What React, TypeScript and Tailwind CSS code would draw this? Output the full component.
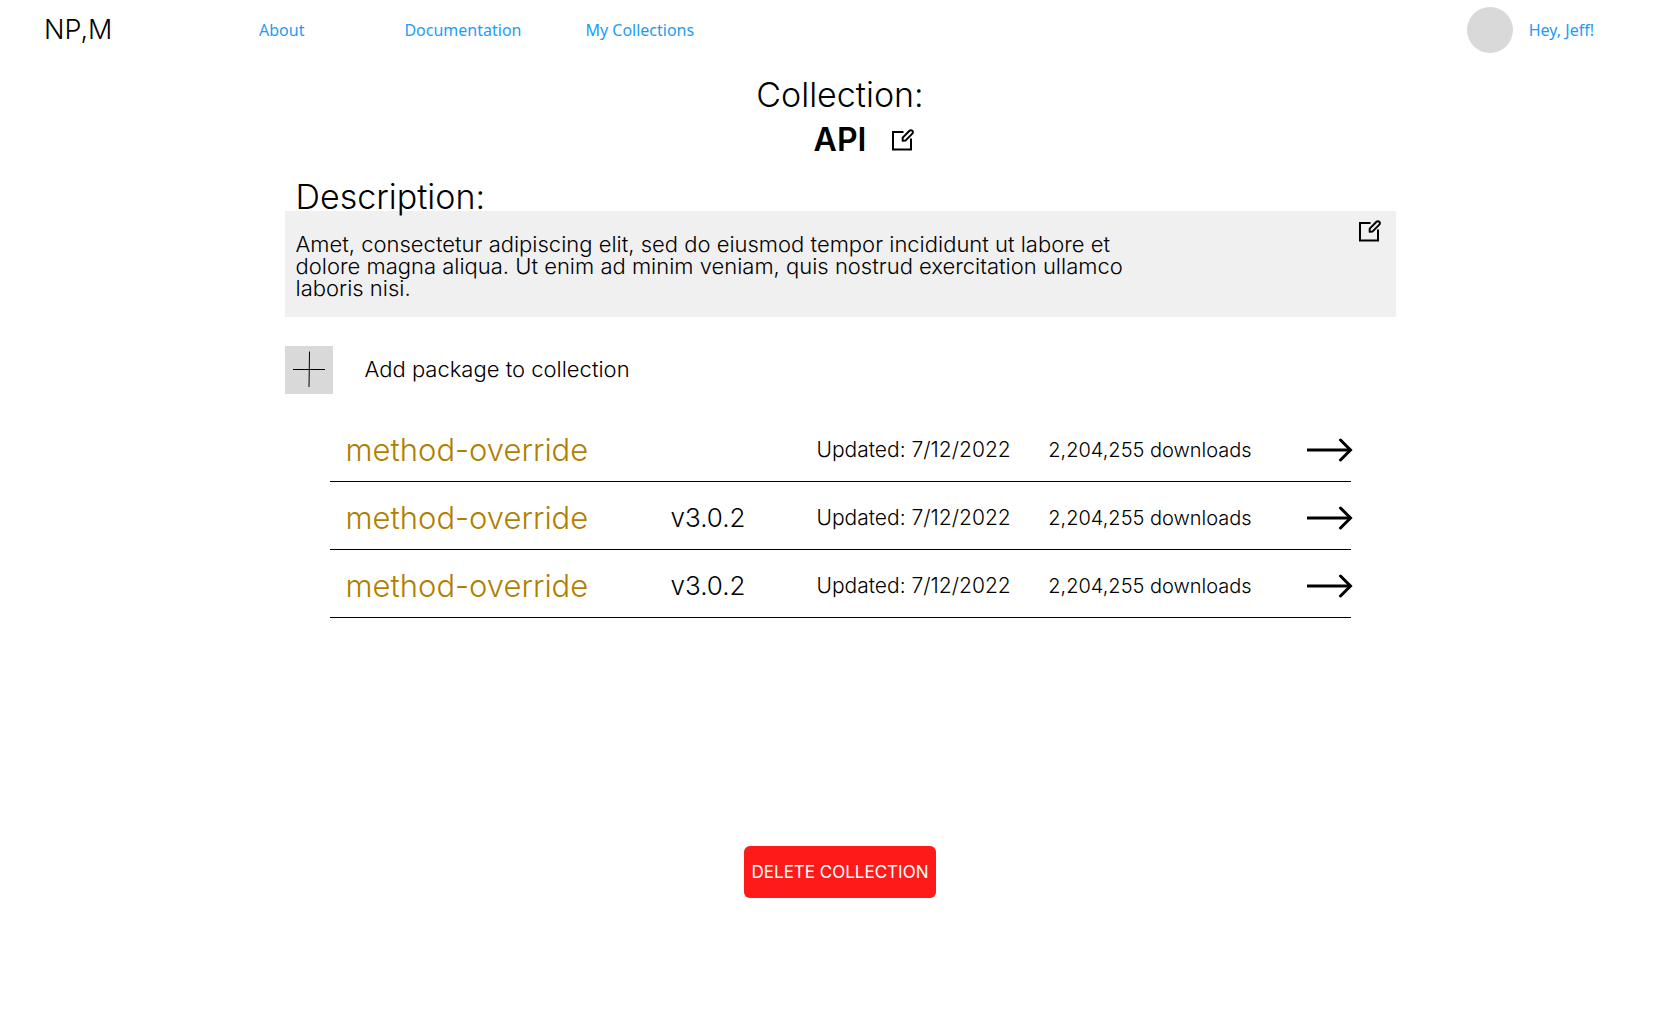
import type { ReactNode } from "react";

type Pkg = { id: number; name: string; version?: string; updated: string; downloads: string };

const packages: Pkg[] = [
  { id: 1, name: "method-override", updated: "7/12/2022", downloads: "2,204,255" },
  { id: 2, name: "method-override", version: "v3.0.2", updated: "7/12/2022", downloads: "2,204,255" },
  { id: 3, name: "method-override", version: "v3.0.2", updated: "7/12/2022", downloads: "2,204,255" },
];

function EditIcon() {
  return (
    <svg width="22" height="24" viewBox="0 0 22 24" fill="none" stroke="black" strokeWidth="2" aria-hidden="true">
      <path d="M11.5 4H1v17.5h18V10.5" />
      <path d="M10.7 12.8v-3.2l6.8-6.8a1.9 1.9 0 0 1 2.8 2.8l-6.6 6.8z" strokeLinejoin="round" />
    </svg>
  );
}

function ArrowIcon() {
  return (
    <svg width="46" height="24" viewBox="0 0 46 24" fill="none" stroke="black" strokeWidth="3" aria-hidden="true">
      <path d="M0 12h44" />
      <path d="M33.5 2L43.5 12l-10 10" strokeLinecap="round" />
    </svg>
  );
}

function PlusIcon() {
  return (
    <svg width="48" height="48" viewBox="0 0 48 48" fill="none" stroke="black" aria-hidden="true">
      <path d="M8 23.5h32" />
      <path d="M24.5 5.5L24 41" />
    </svg>
  );
}

function NavLink({ children }: { children: ReactNode }) {
  return (
    <a href="#" className="font-['Noto_Sans',sans-serif] text-base font-normal text-[#1b9cf7]">
      {children}
    </a>
  );
}

export default function App() {
  return (
    <div className="min-h-screen bg-white pb-16 font-['Inter',sans-serif] font-light text-black">
      <header className="flex h-[60px] items-center pr-[86px] pl-11">
        <a href="#" className="w-[215px] text-[27px] leading-8">
          NP,M
        </a>
        <nav className="flex items-center">
          <div className="mr-[100px]">
            <NavLink>About</NavLink>
          </div>
          <div className="mr-16">
            <NavLink>Documentation</NavLink>
          </div>
          <NavLink>My Collections</NavLink>
        </nav>
        <div className="ml-auto flex items-center gap-4">
          <div className="size-[46px] rounded-full bg-[#d9d9d9]" />
          <NavLink>Hey, Jeff!</NavLink>
        </div>
      </header>

      <main className="mx-auto flex w-full max-w-[1111px] flex-col pt-3">
        <h1 className="text-center text-[34px] leading-[45px]">Collection:</h1>
        <div className="grid grid-cols-[1fr_auto_1fr] items-center gap-[26px]">
          <h2 className="col-start-2 text-[32px] leading-[46px] font-semibold">API</h2>
          <button type="button" aria-label="Edit name" className="w-fit">
            <EditIcon />
          </button>
        </div>

        <h2 className="relative z-10 mt-5 pl-[11px] text-[34px] leading-7">Description:</h2>
        <section className="flex items-start justify-between bg-[#f0f0f0] pr-[15px] pl-[11px]">
          <p className="max-w-[850px] pt-[22px] pb-[18px] text-[22px] leading-[22px]">
            Amet, consectetur adipiscing elit, sed do eiusmod tempor incididunt ut labore et dolore magna aliqua. Ut
            enim ad minim veniam, quis nostrud exercitation ullamco laboris nisi.
          </p>
          <button type="button" aria-label="Edit description" className="mt-2">
            <EditIcon />
          </button>
        </section>

        <button type="button" className="mt-[29px] flex w-fit items-center gap-8 text-[22px] leading-7">
          <span className="bg-[#d9d9d9]">
            <PlusIcon />
          </span>
          <span className="pb-0.5">Add package to collection</span>
        </button>

        <div className="px-[45px] pt-[19px]">
          <table className="w-full table-fixed border-collapse">
            <colgroup>
              <col className="w-[33.4%]" />
              <col className="w-[14.3%]" />
              <col className="w-[22.7%]" />
              <col className="w-[25.3%]" />
              <col />
            </colgroup>
            <tbody>
              {packages.map((p) => (
                <tr key={p.id} className="h-[68px] border-b border-black whitespace-nowrap">
                  <td className="pt-1.5 pl-4 text-[31px] leading-10 text-[#b07f00]">{p.name}</td>
                  <td className="pt-1.5 text-[26px] leading-10">{p.version}</td>
                  <td className="pt-1.5 text-[21px] leading-10">Updated: {p.updated}</td>
                  <td className="pt-1.5 text-[20px] leading-10">{p.downloads} downloads</td>
                  <td className="pt-1.5">
                    <button type="button" aria-label={"Open " + p.name} className="block">
                      <ArrowIcon />
                    </button>
                  </td>
                </tr>
              ))}
            </tbody>
          </table>
        </div>

        <button
          type="button"
          className="mx-auto mt-[228px] h-[52px] w-48 rounded-md bg-[#ff1a1a] text-[17px] leading-6 font-normal whitespace-nowrap text-white"
        >
          DELETE COLLECTION
        </button>
      </main>
    </div>
  );
}
